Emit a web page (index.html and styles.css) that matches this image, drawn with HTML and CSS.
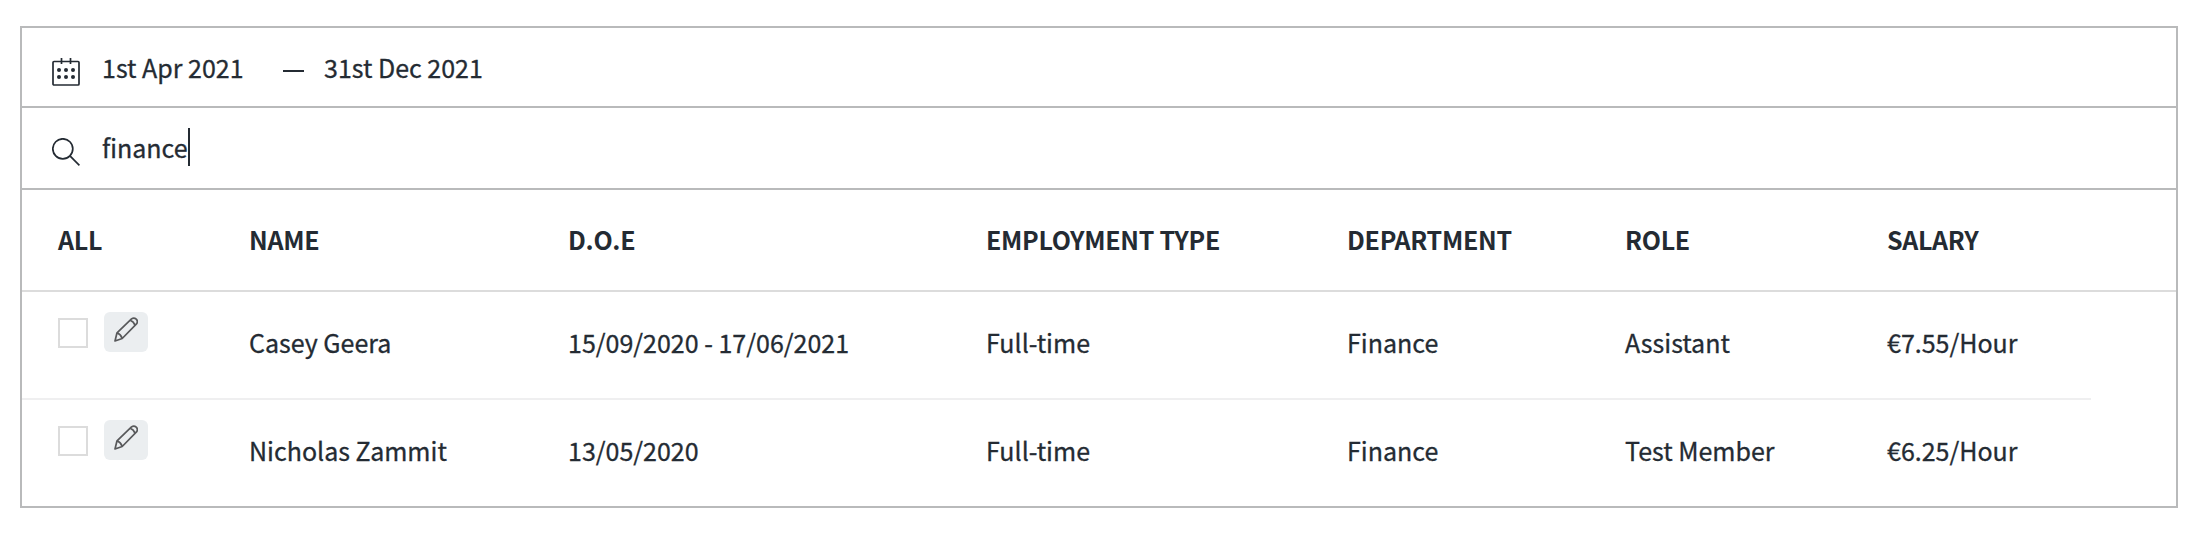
FILE: index.html
```html
<!DOCTYPE html>
<html lang="en">
<head>
    <meta charset="UTF-8">
    <meta name="viewport" content="width=device-width, initial-scale=1.0">
    <title>Employees</title>
    <link rel="stylesheet" href="styles.css">
</head>
<body>
    <div class="panel">
        <div class="filter date-filter">
            <svg class="filter-icon" viewBox="0 0 28 28">
                <rect x="1" y="3.5" width="26" height="23.5" rx="1"/>
                <path d="M9.5 0v6M18.5 0v6"/>
                <g class="dots">
                    <circle cx="7" cy="12" r="2"/><circle cx="14" cy="12" r="2"/><circle cx="21" cy="12" r="2"/>
                    <circle cx="7" cy="19" r="2"/><circle cx="14" cy="19" r="2"/><circle cx="21" cy="19" r="2"/>
                </g>
            </svg>
            <span class="date-from">1st Apr 2021</span>
            <span class="dash"></span>
            <span class="date-to">31st Dec 2021</span>
        </div>
        <div class="filter search-filter">
            <svg class="filter-icon" viewBox="0 0 28 28">
                <circle cx="10.8" cy="10.8" r="10"/>
                <path d="M18.2 18.2l9.2 9.2"/>
            </svg>
            <span class="search-text">finance</span>
            <span class="caret"></span>
        </div>

        <div class="table-row table-head">
            <div>ALL</div>
            <div>NAME</div>
            <div>D.O.E</div>
            <div>EMPLOYMENT TYPE</div>
            <div>DEPARTMENT</div>
            <div>ROLE</div>
            <div>SALARY</div>
        </div>
        <div class="table-row">
            <div class="actions">
                <span class="checkbox"></span>
                <button class="edit">
                    <svg viewBox="0 0 24 25"><path d="M1 24L3 15.8 17.5 1.9Q20 0 22.2 2.2T22.5 6.9L8.2 21.5ZM3 15.8Q6.8 17.2 8.2 21.5M16.2 3.2Q19.7 4.5 21 8.3"/></svg>
                </button>
            </div>
            <div>Casey Geera</div>
            <div>15/09/2020 - 17/06/2021</div>
            <div>Full-time</div>
            <div>Finance</div>
            <div>Assistant</div>
            <div>€7.55/Hour</div>
        </div>
        <div class="table-row">
            <div class="actions">
                <span class="checkbox"></span>
                <button class="edit">
                    <svg viewBox="0 0 24 25"><path d="M1 24L3 15.8 17.5 1.9Q20 0 22.2 2.2T22.5 6.9L8.2 21.5ZM3 15.8Q6.8 17.2 8.2 21.5M16.2 3.2Q19.7 4.5 21 8.3"/></svg>
                </button>
            </div>
            <div>Nicholas Zammit</div>
            <div>13/05/2020</div>
            <div>Full-time</div>
            <div>Finance</div>
            <div>Test Member</div>
            <div>€6.25/Hour</div>
        </div>
    </div>
</body>
</html>
```
FILE: styles.css
```css
* {
    box-sizing: border-box;
}
body {
    margin: 0;
    padding: 26px 22px 28px 20px;
    background: #fff;
    color: #242b33;
    font-family: 'Noto Sans CJK SC', sans-serif;
    font-size: 25px;
    line-height: 36px;
    -webkit-text-stroke: 0.3px #242b33;
}
.panel {
    height: 482px;
    border: 2px solid #b9babb;
}
.filter {
    display: flex;
    align-items: flex-start;
    border-bottom: 2px solid #b9babb;
    padding-left: 30px;
}
.date-filter {
    height: 80px;
    padding-top: 21px;
}
.search-filter {
    height: 82px;
    padding-top: 20px;
}
.filter-icon {
    width: 28px;
    height: 28px;
    margin: 9px 22px 0 0;
    fill: none;
    stroke: #242b33;
    stroke-width: 1.7;
}
.search-filter .filter-icon {
    margin-top: 10px;
}
.dots {
    fill: #242b33;
    stroke: none;
}
.date-from {
    width: 181px;
}
.dash {
    width: 21px;
    height: 2px;
    margin: 21px 20px 0 0;
    background: #242b33;
}
.search-text {
    margin-top: 1px;
}
.caret {
    width: 2px;
    height: 38px;
    background: #242b33;
}
.table-row {
    display: grid;
    grid-template-columns: 191px 319px 418px 361px 278px 262px 1fr;
    width: 2069px;
    height: 108px;
    padding: 32px 0 0 36px;
    border-bottom: 2px solid #efeff0;
}
.table-row:last-child {
    border-bottom: none;
}
.table-head {
    width: auto;
    height: 102px;
    padding-top: 31px;
    border-color: #dcdcdc;
    font-weight: bold;
    letter-spacing: -0.3px;
    -webkit-text-stroke: 0;
}
.actions {
    display: flex;
    align-items: flex-start;
    gap: 16px;
    margin-top: -12px;
}
.checkbox {
    width: 30px;
    height: 30px;
    margin-top: 6px;
    border: 2px solid #dcdcdc;
}
.edit {
    width: 44px;
    height: 40px;
    padding: 5px 0 0 10px;
    border: none;
    border-radius: 6px;
    background: #ebeef0;
    text-align: left;
}
.edit svg {
    display: block;
    width: 24px;
    height: 25px;
    margin-bottom: 10px;
    fill: none;
    stroke: #58595b;
    stroke-width: 1.7;
    stroke-linejoin: round;
}
```
